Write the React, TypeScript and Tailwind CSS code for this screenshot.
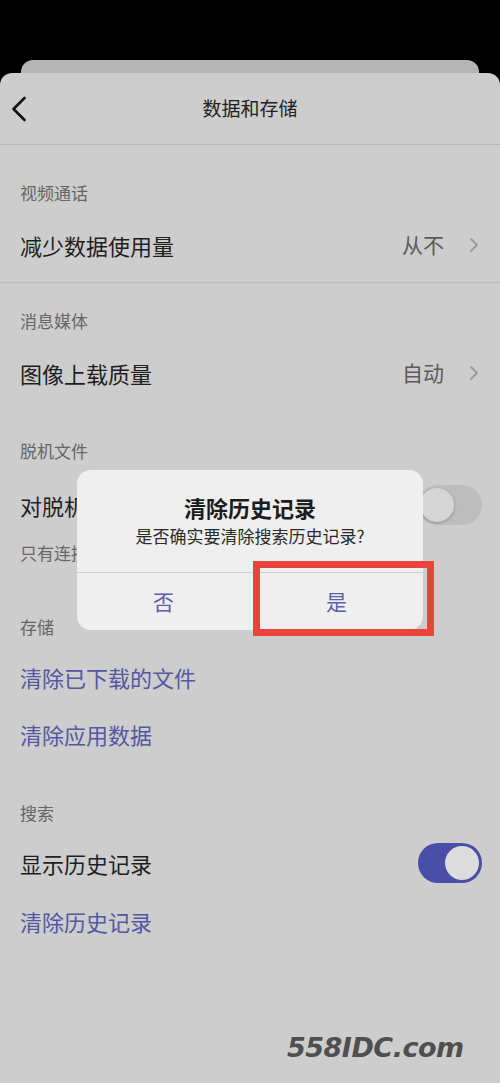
import React from 'react';

// --- HJÆLPERE ---
const Chevron = () => (
  <svg width="10" height="16" viewBox="0 0 10 16" fill="none" className="ml-[25px]">
    <path d="M2 2l6 6-6 6" stroke="#9a9a9a" strokeWidth="1.8" strokeLinecap="round" strokeLinejoin="round" />
  </svg>
);

const Toggle = ({ on }: { on: boolean }) =>
  on ? (
    <div className="w-[64px] h-[40px] rounded-full bg-[#4a4ea6] flex items-center justify-end pr-[3px]">
      <div className="w-[34px] h-[34px] rounded-full bg-[#dcdcdc]" />
    </div>
  ) : (
    <div className="w-[64px] h-[40px] rounded-full bg-[#bdbdbd] flex items-center pl-[2px]">
      <div className="w-[34px] h-[34px] rounded-full bg-[#d6d6d6] shadow-[0_1px_3px_rgba(0,0,0,0.25)]" />
    </div>
  );

const Label = ({ text, className }: { text: string; className: string }) => (
  <div className={`px-[20px] text-[17px] leading-[24px] text-[#666666] ${className}`}>{text}</div>
);

const Row = ({ text, value, className }: { text: string; value?: string; className: string }) => (
  <div className={`flex items-center px-[20px] pr-[21px] ${className}`}>
    <span className="flex-1 text-[22px] text-[#1f1f1f]">{text}</span>
    {value && <span className="text-[21px] text-[#5a5a5a]">{value}</span>}
    {value && <Chevron />}
  </div>
);

const LinkRow = ({ text, className }: { text: string; className: string }) => (
  <div className={`flex items-center px-[20px] text-[22px] text-[#5458a2] ${className}`}>{text}</div>
);

export default function App() {
  return (
    <div className="relative w-[500px] h-[1083px] overflow-hidden bg-black font-['Noto_Sans_CJK_SC','Noto_Sans',sans-serif]">
      <div className="h-[60px]" />
      {/* kort bagved */}
      <div className="mx-[21px] h-[13px] rounded-t-[12px] bg-[#b5b5b5]" />

      {/* hovedark */}
      <div className="h-[1010px] rounded-t-[12px] bg-[#cdcdcd]">
        <div className="relative h-[72px] flex items-center justify-center border-b border-[#b8b8b8]">
          <svg width="16" height="26" viewBox="0 0 16 26" fill="none" className="absolute left-[11px] top-[23px]">
            <path d="M13.5 2L2.5 13l11 11" stroke="#111111" strokeWidth="2.6" strokeLinecap="round" strokeLinejoin="round" />
          </svg>
          <span className="text-[19px] text-[#222222]">数据和存储</span>
        </div>

        <div className="border-b border-[#bdbdbd] pb-[5px]">
          <Label text="视频通话" className="pt-[36px]" />
          <Row text="减少数据使用量" value="从不" className="mt-[8px] h-[64px]" />
        </div>

        <Label text="消息媒体" className="pt-[26px]" />
        <Row text="图像上载质量" value="自动" className="mt-[8px] h-[64px]" />

        <Label text="脱机文件" className="mt-[34px]" />
        <div className="flex items-center pl-[20px] pr-[18px] mt-[10px] h-[64px]">
          <span className="flex-1 text-[22px] text-[#1f1f1f]">对脱机文件使用</span>
          <Toggle on={false} />
        </div>
        <Label text="只有连接到 Wi-Fi 时" className="mt-[4px]" />

        <Label text="存储" className="mt-[50px]" />
        <LinkRow text="清除已下载的文件" className="mt-[10px] h-[56px]" />
        <LinkRow text="清除应用数据" className="mt-[1px] h-[56px]" />

        <Label text="搜索" className="mt-[39px]" />
        <div className="flex items-center pl-[20px] pr-[18px] mt-[10px] h-[56px]">
          <span className="flex-1 text-[22px] text-[#1f1f1f]">显示历史记录</span>
          <Toggle on />
        </div>
        <LinkRow text="清除历史记录" className="mt-[2px] h-[56px]" />
      </div>

      {/* DIALOG */}
      <div className="absolute left-[77px] top-[470px] w-[346px] h-[160px] rounded-[14px] bg-[#efefef] flex flex-col">
        <div className="pt-[23px] text-center text-[22px] leading-[28px] font-bold text-[#1c1c1c]">清除历史记录</div>
        <div className="mt-[3px] text-center text-[17px] leading-[24px] text-[#2a2a2a]">是否确实要清除搜索历史记录?</div>
        <div className="mt-[24px] flex-1 flex border-t border-[#cfcfcf]">
          <div className="flex-1 flex items-center justify-center text-[21px] text-[#5b5fa8]">否</div>
          <div className="flex-1 flex items-center justify-center text-[21px] text-[#5b5fa8]">是</div>
        </div>
      </div>

      {/* markering */}
      <div className="absolute left-[253px] top-[561px] w-[181px] h-[75px] border-[7px] border-[#e8443a]" />

      {/* vandmærke */}
      <div className="absolute left-[287px] top-[1030px] text-[27px] leading-[36px] font-bold italic tracking-[-0.5px] text-[#4f4f4f] font-['DejaVu_Sans',sans-serif]">
        558IDC.com
      </div>
    </div>
  );
}
